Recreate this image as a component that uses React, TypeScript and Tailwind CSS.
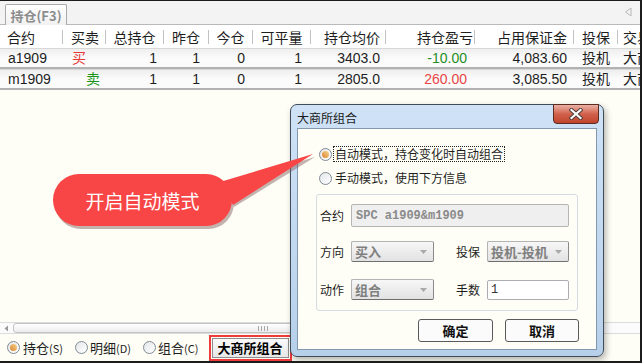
import React from "react";

const cols = [
  { title: "合约", w: "w-[63px]", head: "justify-start pl-[7px]", cell: "justify-start pl-[8px]" },
  { title: "买卖", w: "w-[43px]", head: "justify-start pl-[8px]", cell: "justify-start" },
  { title: "总持仓", w: "w-[58px]", head: "justify-center", cell: "justify-end pr-[7px]" },
  { title: "昨仓", w: "w-[45px]", head: "justify-center", cell: "justify-end pr-[9px]" },
  { title: "今仓", w: "w-[44px]", head: "justify-center", cell: "justify-end pr-[8px]" },
  { title: "可平量", w: "w-[58px]", head: "justify-center", cell: "justify-end pr-[9px]" },
  { title: "持仓均价", w: "w-[75px]", head: "justify-end pr-[5px]", cell: "justify-end pr-[6px]" },
  { title: "持仓盈亏", w: "w-[89px]", head: "justify-end pr-[1px]", cell: "justify-end pr-[8px]" },
  { title: "占用保证金", w: "w-[99px]", head: "justify-end pr-[6px]", cell: "justify-end pr-[7px]" },
  { title: "投保", w: "w-[44px]", head: "justify-start pl-[8px]", cell: "justify-start pl-[8px]" },
  { title: "交易所", w: "flex-1 min-w-0", head: "justify-start pl-[5px]", cell: "justify-start pl-[5px]" },
];

const rows = [
  {
    cells: ["a1909", "买", "1", "1", "0", "1", "3403.0", "-10.00", "4,083.60", "投机", "大商所"],
    side: "text-[#e53935] pl-[9px]",
    pnl: "text-[#1f8f1f]",
  },
  {
    cells: ["m1909", "卖", "1", "1", "0", "1", "2805.0", "260.00", "3,085.50", "投机", "大商所"],
    side: "text-[#1a961a] pl-[23px]",
    pnl: "text-[#e84545]",
  },
];

function Radio({ checked }: { checked?: boolean }) {
  return (
    <span className="w-[13px] h-[13px] shrink-0 rounded-full border border-[#7f8a94] bg-gradient-to-br from-[#e4e6e8] to-[#ffffff] flex items-center justify-center">
      {checked && (
        <span className="w-[7px] h-[7px] rounded-full bg-gradient-to-tr from-[#d9822b] to-[#f7d58a]" />
      )}
    </span>
  );
}

function Select({ value, w }: { value: string; w: string }) {
  return (
    <div
      className={`${w} h-[21px] shrink-0 rounded-[2px] border border-[#b3b3b3] border-b-[#6f6f6f] border-r-[#8a8a8a] bg-gradient-to-b from-[#f7f7f7] to-[#e2e2e2] flex items-center pl-[3px] pr-[6px]`}
    >
      <span className="flex-1 text-[13px] font-bold text-[#7f7f7f] leading-none whitespace-nowrap">{value}</span>
      <svg width="7" height="4" viewBox="0 0 7 4">
        <path d="M0 0H7L3.5 4Z" fill="#a9a9a9" />
      </svg>
    </div>
  );
}

export default function App() {
  return (
    <div className="relative w-[642px] h-[363px] overflow-hidden border-t border-r-2 border-b-2 border-[#1c1c1c] bg-[#fffef6] flex flex-col font-['Noto_Sans_CJK_SC',sans-serif] text-[#1e1e1e]">
      {/* tab strip */}
      <div className="h-[24px] shrink-0 bg-[#f3f3f3] border-b border-[#b9b9b9] flex items-end pl-[5px] pr-[8px]">
        <div className="w-[62px] h-[21px] -mb-px rounded-t-[2px] border border-b-0 border-[#a9a9a9] bg-gradient-to-b from-[#ffffff] to-[#f1f1f1] flex items-center justify-center text-[13px] font-bold text-[#8c8c8c] leading-none">
          持仓(F3)
        </div>
        <div className="flex-1" />
        <svg width="8" height="10" viewBox="0 0 8 10" className="mb-[7px]">
          <path d="M7 1L1.5 5L7 9Z" fill="none" stroke="#b8b8b8" />
        </svg>
      </div>

      {/* header */}
      <div className="h-[23px] shrink-0 bg-white flex text-[14px] leading-none">
        {cols.map((c, i) => (
          <div key={c.title} className={`${c.w} shrink-0 flex items-center overflow-hidden whitespace-nowrap`}>
            <div className={`flex-1 flex ${c.head}`}>{c.title}</div>
            {i < cols.length - 1 && <span className="w-px h-[14px] shrink-0 bg-[#c2c2c2]" />}
          </div>
        ))}
      </div>

      {/* rows */}
      {rows.map((r) => (
        <div
          key={r.cells[0]}
          className="h-[21px] shrink-0 flex border-t border-[#d8d8d8] border-b-2 border-b-[#b2b2b2] bg-gradient-to-b from-[#eeeeee] via-[#fbfbfb] to-[#fbfbfb] text-[14px] leading-none font-['Liberation_Sans','Noto_Sans_CJK_SC',sans-serif]"
        >
          {cols.map((c, i) => (
            <div
              key={c.title}
              className={`${c.w} shrink-0 flex items-center overflow-hidden whitespace-nowrap ${i === 1 ? r.side : c.cell} ${i === 7 ? r.pnl : ""}`}
            >
              {r.cells[i]}
            </div>
          ))}
        </div>
      ))}

      <div className="flex-1" />

      {/* horizontal scrollbar */}
      <div className="h-[12px] shrink-0 flex items-center border-y border-[#dcdcdc] bg-[#fbfbfb] pl-[2px]">
        <svg width="9" height="9" viewBox="0 0 9 9">
          <path d="M6 1.5L2.5 4.5L6 7.5Z" fill="#9a9a9a" />
        </svg>
        <div className="ml-[2px] w-[500px] h-[10px] rounded-[3px] border border-[#c3c3c3] bg-gradient-to-b from-[#ffffff] to-[#ececec] flex items-center justify-center">
          <span className="w-[10px] h-[5px] border-x border-[#a8a8a8] flex justify-center gap-[2px]">
            <span className="w-px h-full bg-[#a8a8a8]" />
            <span className="w-px h-full bg-[#a8a8a8]" />
          </span>
        </div>
      </div>

      {/* bottom radios */}
      <div className="h-[27px] shrink-0 flex items-center pl-[7px] text-[13px] leading-none">
        <Radio checked />
        <span className="ml-[3px]">持仓<span className="text-[11px]">(S)</span></span>
        <span className="ml-[12px]" />
        <Radio />
        <span className="ml-[2px]">明细<span className="text-[11px]">(D)</span></span>
        <span className="ml-[12px]" />
        <Radio />
        <span className="ml-[2px]">组合<span className="text-[11px]">(C)</span></span>
        <div className="ml-[10px] w-[83px] h-[26px] border-2 border-[#ef3b3b] p-px flex">
          <div className="flex-1 border border-[#8d8d8d] bg-gradient-to-b from-[#fbfbfb] to-[#e7e7e7] flex items-center justify-center text-[13px] font-bold text-black">
            大商所组合
          </div>
        </div>
      </div>

      {/* dialog */}
      <div className="absolute left-[290px] top-[103px] w-[314px] h-[253px] rounded-[7px] border border-[#3f4c5a] bg-gradient-to-b from-[#cfe2f6] to-[#b7d0ea] flex flex-col shadow-[2px_3px_6px_rgba(0,0,0,0.3)]">
        <div className="relative h-[23px] shrink-0 flex items-center pl-[6px] pt-[2px] text-[12px] leading-none text-[#1a1a1a]">
          大商所组合
          <div className="absolute right-[4px] -top-px w-[46px] h-[20px] rounded-b-[4px] border border-[#5b2b22] bg-gradient-to-b from-[#eab1a4] via-[#d0614c] to-[#c2442c] flex items-center justify-center">
            <svg width="14" height="12" viewBox="0 0 14 12">
              <path d="M2.5 2L11.5 10M11.5 2L2.5 10" stroke="#4a3a38" strokeWidth="4" strokeLinecap="square" />
              <path d="M2.5 2L11.5 10M11.5 2L2.5 10" stroke="#ffffff" strokeWidth="2.2" strokeLinecap="square" />
            </svg>
          </div>
        </div>
        <div className="mx-[6px] mb-[6px] flex-1 border border-[#8298ae] bg-[#fffef6] flex flex-col text-[12px] leading-none">
          <div className="mt-[17px] h-[16px] flex items-center pl-[21px]">
            <Radio checked />
            <span className="ml-[1px] px-[1px] py-[1px] border border-dotted border-[#222]">自动模式，持仓变化时自动组合</span>
          </div>
          <div className="mt-[8px] h-[16px] flex items-center pl-[21px]">
            <Radio />
            <span className="ml-[3px]">手动模式，使用下方信息</span>
          </div>

          <div className="mt-[8px] ml-[18px] w-[262px] h-[117px] rounded-[3px] border border-[#d3dce4] flex flex-col pl-[3px]">
            <div className="mt-[9px] h-[23px] flex items-center">
              <span className="w-[31px] shrink-0">合约</span>
              <div className="w-[218px] h-[23px] rounded-[2px] border border-[#b4b4b4] bg-[#efefef] flex items-center pl-[4px] font-['Liberation_Mono',monospace] font-bold text-[12px] text-[#8a8a8a]">
                SPC a1909&amp;m1909
              </div>
            </div>
            <div className="mt-[14px] h-[21px] flex items-center">
              <span className="w-[31px] shrink-0">方向</span>
              <Select value="买入" w="w-[83px]" />
              <span className="w-[22px] shrink-0" />
              <span className="w-[31px] shrink-0">投保</span>
              <Select value="投机-投机" w="w-[82px]" />
            </div>
            <div className="mt-[17px] h-[21px] flex items-center">
              <span className="w-[31px] shrink-0">动作</span>
              <Select value="组合" w="w-[83px]" />
              <span className="w-[22px] shrink-0" />
              <span className="w-[31px] shrink-0">手数</span>
              <div className="w-[82px] h-[20px] rounded-[2px] border border-[#abadb3] bg-white flex items-center pl-[3px] font-['Liberation_Mono',monospace] text-[12px] text-[#333]">
                1
              </div>
            </div>
          </div>

          <div className="mt-[8px] flex justify-end gap-[12px] pr-[17px]">
            <button className="w-[75px] h-[23px] rounded-[3px] border border-[#5a5a5a] bg-[#fbfbfb] text-[13px] font-bold text-[#111]">
              确定
            </button>
            <button className="w-[74px] h-[23px] rounded-[3px] border border-[#5a5a5a] bg-[#fbfbfb] text-[13px] font-bold text-[#111]">
              取消
            </button>
          </div>
        </div>
      </div>

      {/* callout */}
      <div className="absolute left-[50px] top-[148px] w-[270px] h-[85px]">
        <svg width="270" height="85" viewBox="0 0 270 85" className="absolute inset-0">
          <g fill="#7a5a5a" opacity="0.45" transform="translate(2 3)">
            <rect x="3" y="25" width="179" height="52" rx="26" />
            <path d="M172 32L263 5L182 55Z" />
          </g>
          <rect x="3" y="25" width="179" height="52" rx="26" fill="#f84545" />
          <path d="M170 33L263 5L183 56Z" fill="#f84545" />
        </svg>
        <div className="absolute left-[3px] top-[25px] w-[179px] h-[52px] flex items-center justify-center text-[19px] leading-none text-white">
          开启自动模式
        </div>
      </div>
    </div>
  );
}
